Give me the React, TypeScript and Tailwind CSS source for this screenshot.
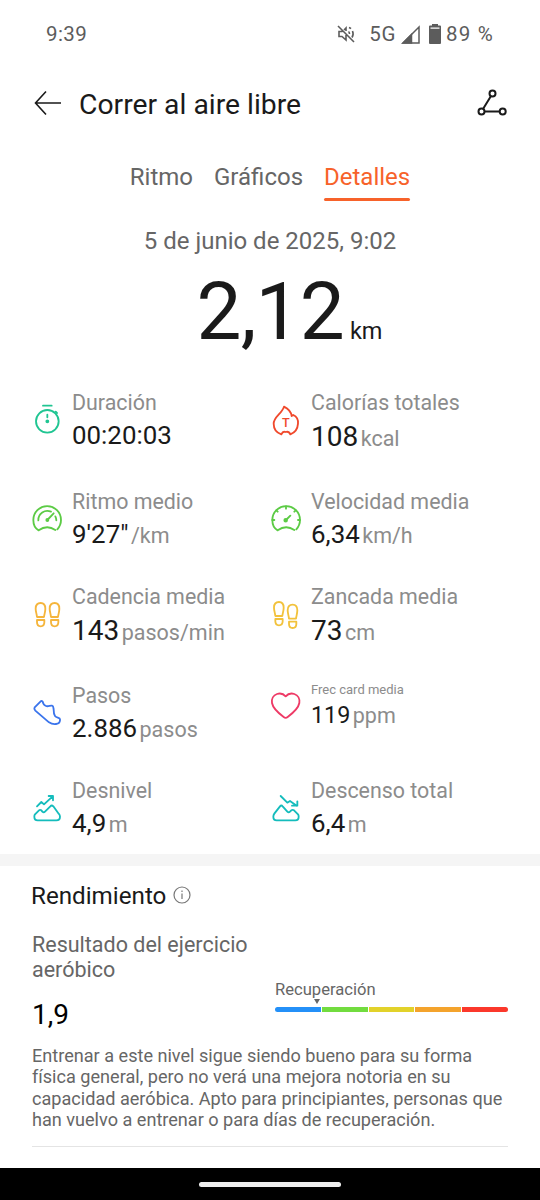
import type { ReactNode } from 'react'

type Metric = {
  label: string
  value: string
  unit?: string
  icon: ReactNode
  color: string
  size?: 'lg' | 'sm'
}

function Gauge({ children }: { children: ReactNode }) {
  return (
    <>
      <path d="M23 82C12 76 7 64 7 51A41.500 41.500 0 0 1 90 51C90 63 86 71 79 79M23 82Q48 64 73 81" />
      {children}
    </>
  )
}

function Sole({ x, y }: { x: number; y: number }) {
  return (
    <g transform={`translate(${x} ${y})`}>
      <path d="M4 42C3 32 0 26 0 17C0 6 6 0 15 0C24 0 29 7 29 17C29 26 26 34 25 42Z" />
      <path d="M4 51H26V58C26 66 21 70 15 70C9 70 4 66 4 58Z" />
    </g>
  )
}

const metrics: Metric[] = [
  {
    label: 'Duración',
    value: '00:20:03',
    color: 'text-[#20c592]',
    icon: (
      <>
        <circle cx="49" cy="52" r="34" />
        <path d="M36 5H62M49 32V40M74 23L78 27" />
        <circle cx="49" cy="52" r="3" fill="currentColor" />
      </>
    ),
  },
  {
    label: 'Calorías totales',
    value: '108',
    unit: 'kcal',
    size: 'lg',
    color: 'text-[#f0492c]',
    icon: (
      <>
        <path d="M34 91C20 86 11 74 11 59C11 38 35 30 42 8C52 13 63 22 65 36L70 33C79 37 85 46 84 59C83 75 75 86 61 91C58 84 53 82 47 84C42 82 37 84 34 91Z" />
        <text x="47.500" y="70" textAnchor="middle" fontSize="38" fontWeight="500" fill="currentColor" stroke="none">
          T
        </text>
      </>
    ),
  },
  {
    label: 'Ritmo medio',
    value: `9'27"`,
    unit: '/km',
    color: 'text-[#5ccb45]',
    icon: (
      <Gauge>
        <path d="M22 52A27 27 0 0 1 60 26M49 51L68 31M73 40Q76 46 76 52" />
        <circle cx="49" cy="51" r="3" fill="currentColor" />
      </Gauge>
    ),
  },
  {
    label: 'Velocidad media',
    value: '6,34',
    unit: 'km/h',
    color: 'text-[#5ccb45]',
    icon: (
      <Gauge>
        <path d="M48 10V17M19 22L23 26M77 22L73 26M7 51H13M90 51H84M48 51L61 38" />
        <circle cx="47" cy="52" r="4" fill="currentColor" />
      </Gauge>
    ),
  },
  {
    label: 'Cadencia media',
    value: '143',
    unit: 'pasos/min',
    size: 'lg',
    color: 'text-[#f5b53c]',
    icon: (
      <>
        <Sole x={14} y={15} />
        <Sole x={56} y={15} />
      </>
    ),
  },
  {
    label: 'Zancada media',
    value: '73',
    unit: 'cm',
    size: 'lg',
    color: 'text-[#f2c23c]',
    icon: (
      <>
        <Sole x={12} y={12} />
        <Sole x={53} y={20} />
      </>
    ),
  },
  {
    label: 'Pasos',
    value: '2.886',
    unit: 'pasos',
    color: 'text-[#3a74ec]',
    icon: (
      <path d="M11 31L29 13Q32 11 35 14C36 19 39 25 45 27C51 30 57 25 63 26C68 27 67 32 68 38C68 46 69 53 72 57C76 63 87 61 87 67C88 76 83 80 75 81C67 82 60 80 54 76L13 41Q8 36 11 31Z" />
    ),
  },
  {
    label: 'Frec card media',
    value: '119',
    unit: 'ppm',
    size: 'sm',
    color: 'text-[#ee3a66]',
    icon: (
      <path d="M47 19C40 11 30 9 21 12C10 16 4 27 6 39C9 56 25 69 41 81Q47 86 53 81C69 69 85 56 88 39C90 27 84 16 73 12C64 9 54 11 47 19Z" />
    ),
  },
  {
    label: 'Desnivel',
    value: '4,9',
    unit: 'm',
    color: 'text-[#14bcbc]',
    icon: (
      <path d="M18 43L31 30L39 37L65 13M53 12H66V25M24 55L12 67Q10 70 10 74Q10 85 20 85H76Q87 85 87 74Q87 69 83 65L67 43Q62 38 58 43L42 59Q38 63 34 59L31 55Q27 52 24 55Z" />
    ),
  },
  {
    label: 'Descenso total',
    value: '6,4',
    unit: 'm',
    color: 'text-[#14bcbc]',
    icon: (
      <path d="M32 12L52 32L60 27L80 41M82 28V41H66M72 55L84 67Q86 70 86 74Q86 85 76 85H20Q10 85 10 74Q10 69 13 65L30 43Q34 38 38 43L52 59Q56 63 60 59L64 55Q68 52 72 55Z" />
    ),
  },
]

const zones = ['bg-[#2490f8]', 'bg-[#72dc3f]', 'bg-[#e2d22a]', 'bg-[#f4a32c]', 'bg-[#fb382b]']

function MetricCell({ label, value, unit, icon, color, size }: Metric) {
  const small = size === 'sm'
  return (
    <div className="flex items-start gap-[9px]">
      <svg
        viewBox="0 0 96 96"
        className={`size-8 shrink-0 ${small ? 'mt-[7px]' : 'mt-[14px]'} ${color}`}
        fill="none"
        stroke="currentColor"
        strokeWidth="5.500"
        strokeLinecap="round"
        strokeLinejoin="round"
      >
        {icon}
      </svg>
      <div className="whitespace-nowrap">
        <div className={`text-[#8c8c8c] ${small ? 'text-[13px] leading-[14px]' : 'text-[21.4px] leading-[26px]'}`}>
          {label}
        </div>
        <div
          className={
            small
              ? 'text-[23.300px] leading-[37px]'
              : size === 'lg'
                ? 'text-[28px] leading-[42.700px]'
                : 'text-[25.900px] leading-[39px]'
          }
        >
          {value}
          {unit && <span className="ml-[2.500px] text-[21.5px] leading-none text-[#8c8c8c]">{unit}</span>}
        </div>
      </div>
    </div>
  )
}

function StatusBar() {
  return (
    <div className="flex h-17 items-center justify-between px-[46px] text-[20.5px] text-[#5c5c5c]">
      <span className="tracking-[0.4px]">9:39</span>
      <div className="flex items-center">
        <svg viewBox="0 0 18 18" className="mr-[14px] size-[18px]" fill="none" stroke="currentColor" strokeWidth="1.600">
          <path d="M1 1L17 17M5.500 6.500H2V11.500H5L9 15V10M9 6V3L7 5M12 2.500A7 7 0 0 1 14 3.700M15.500 6A7 7 0 0 1 15 12.500M11.500 6.500A3 3 0 0 1 12.500 9" />
        </svg>
        <span className="tracking-[0.6px]">5G</span>
        <svg viewBox="0 0 19 19" className="mr-[6px] ml-[5px] size-[19px]" fill="none" stroke="currentColor" strokeWidth="1.500">
          <path d="M2 18L18 2V18Z" />
          <path d="M2 18L10.500 9.500V18Z" fill="currentColor" />
        </svg>
        <svg viewBox="0 0 12 20" className="mr-[5px] ml-[3px] h-5 w-3" fill="currentColor">
          <path d="M3 0H9V1.500H11Q12 1.500 12 2.500V19Q12 20 11 20H1Q0 20 0 19V2.500Q0 1.500 1 1.500H3ZM1.500 3.500V4.800H10.500V3.500Z" fillRule="evenodd" />
        </svg>
        <span className="tracking-[1.200px]">89 %</span>
      </div>
    </div>
  )
}

function Header() {
  return (
    <header className="flex h-[72px] items-center pr-8 pl-[34px]">
      <svg viewBox="0 0 28 26" className="-mt-0.5 h-[26px] w-7" fill="none" stroke="#1a1a1a" strokeWidth="1.600">
        <path d="M12 1.500L1.500 13L12 24.500M1.500 13H27" />
      </svg>
      <h1 className="ml-[17px] pt-px text-[28.3px] leading-9">Correr al aire libre</h1>
      <svg viewBox="0 0 32 30" className="-mt-0.5 ml-auto h-[30px] w-8" fill="none" stroke="#1a1a1a" strokeWidth="2">
        <circle cx="16.500" cy="5.500" r="3" />
        <circle cx="5.500" cy="23.500" r="3" />
        <circle cx="26.700" cy="23.500" r="3" />
        <path d="M15 8L7 21M8.500 23.500H23.700" />
      </svg>
    </header>
  )
}

function Performance() {
  return (
    <section className="px-8 text-[#666]">
      <h2 className="-ml-px flex items-center gap-[7px] pt-[14px] text-[24.200px] leading-8 text-[#1a1a1a]">
        Rendimiento
        <svg viewBox="0 0 18 18" className="-mt-[3px] size-[18px]" fill="none" stroke="#777" strokeWidth="1.200">
          <circle cx="9" cy="9" r="8" />
          <path d="M9 7.500V13M9 4.500V6" />
        </svg>
      </h2>
      <div className="flex justify-between pt-5">
        <div>
          <div className="w-[230px] text-[21.5px] leading-[25.300px]">Resultado del ejercicio aeróbico</div>
          <div className="mt-[11px] text-[28px] leading-[42px] text-black">1,9</div>
        </div>
        <div className="w-[233px] pt-[47px]">
          <div className="pt-px text-[16.6px] leading-[19px]">Recuperación</div>
          <svg viewBox="0 0 6 5" className="ml-[39px] h-[5px] w-1.5" fill="#666">
            <path d="M0 0H6L3 5Z" />
          </svg>
          <div className="mt-[3px] flex h-[5px] gap-px overflow-hidden rounded-full">
            {zones.map((zone) => (
              <div key={zone} className={`flex-1 ${zone}`} />
            ))}
          </div>
        </div>
      </div>
      <p className="mt-[9.500px] text-[18.100px] leading-[21.200px] whitespace-nowrap">
        Entrenar a este nivel sigue siendo bueno para su forma
        <br />
        física general, pero no verá una mejora notoria en su
        <br />
        capacidad aeróbica. Apto para principiantes, personas que
        <br />
        han vuelvo a entrenar o para días de recuperación.
      </p>
      <hr className="mt-[16.500px] border-[#e4e4e4]" />
    </section>
  )
}

export default function App() {
  return (
    <div className="flex h-[1200px] w-[540px] flex-col overflow-hidden bg-white font-[Roboto,sans-serif] text-[#1a1a1a]">
      <StatusBar />
      <Header />
      <nav className="flex h-[61px] justify-center gap-[21px] pt-[21px] text-[24px] leading-8 text-[#666]">
        <span>Ritmo</span>
        <span>Gráficos</span>
        <span className="flex h-10 flex-col justify-between text-[#f7622a]">
          Detalles
          <span className="h-[3px] rounded-full bg-[#f7622a]" />
        </span>
      </nav>
      <div className="mt-6 text-center text-[24px] leading-8 text-[#666]">5 de junio de 2025, 9:02</div>
      <div className="flex h-[110px] items-baseline justify-center pl-[39px] text-[80px] leading-[110px]">
        <span className="tracking-[-0.8px]">2,12</span>
        <span className="ml-[6px] text-[23.5px]">km</span>
      </div>
      <div className="mt-[23px] grid h-[464px] grid-cols-[239px_1fr] content-start gap-y-[30.100px] pl-[31px]">
        {metrics.map((metric) => (
          <MetricCell key={metric.label} {...metric} />
        ))}
      </div>
      <div className="h-3 shrink-0 bg-[#f5f5f5]" />
      <Performance />
      <div className="mt-auto flex h-8 shrink-0 items-center justify-center bg-black">
        <div className="h-[5px] w-[142px] rounded-full bg-[#eee]" />
      </div>
    </div>
  )
}
